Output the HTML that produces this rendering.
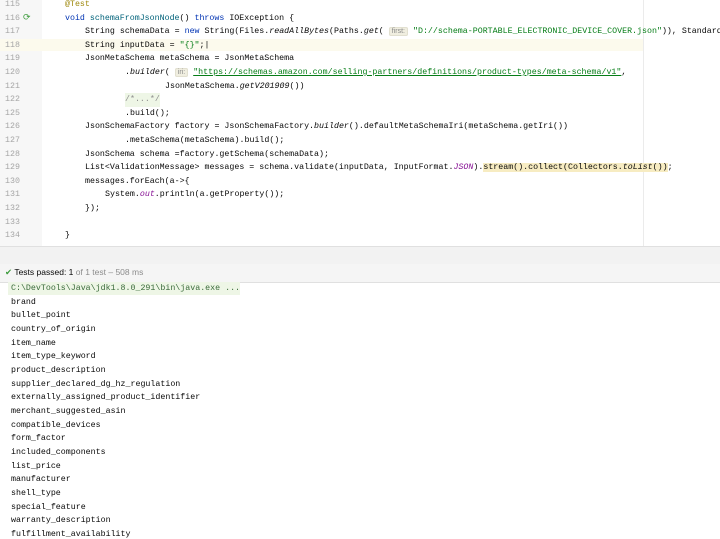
<!DOCTYPE html><html><head><style>
body{margin:0;width:720px;height:539px;overflow:hidden;background:#fff;font-family:"Liberation Mono",monospace;font-size:8.3px;color:#080808;position:relative}
#w{position:absolute;left:0;top:0;width:720px;height:539px;overflow:hidden}
.g{position:absolute;left:0;top:0;width:42px;height:246px;background:#f7f7f7}
.n{position:absolute;left:5px;color:#a6a6a6;height:13.6px;line-height:13.6px}
.l{position:absolute;white-space:pre;height:13.6px;line-height:13.6px}
.k{color:#0033b3}.s{color:#067d17}.a{color:#9e880d}.i{font-style:italic}.p{color:#871094}
.h{background:#f0eee0;border:1px solid #e2e0d0;border-radius:2px;color:#8a8a8a;font-family:"Liberation Sans",sans-serif;font-size:7px;padding:0 2px}
.u{text-decoration:underline}
.c{position:absolute;left:11px;white-space:pre;line-height:13.65px;font-size:8.3px;color:#080808}
</style></head><body><div id="w">
<div class="g"></div>
<div style="position:absolute;left:0;top:39px;width:643px;height:12px;background:#fcfaed"></div>
<div style="position:absolute;left:643px;top:0;width:1px;height:246px;background:#ebebeb"></div>
<div class="n" style="top:-2px">115</div><div class="n" style="top:11.6px">116</div><div class="n" style="top:25.2px">117</div><div class="n" style="top:38.8px">118</div><div class="n" style="top:52.4px">119</div><div class="n" style="top:66px">120</div><div class="n" style="top:79.6px">121</div><div class="n" style="top:93.2px">122</div><div class="n" style="top:106.8px">125</div><div class="n" style="top:120.4px">126</div><div class="n" style="top:134px">127</div><div class="n" style="top:147.6px">128</div><div class="n" style="top:161.2px">129</div><div class="n" style="top:174.8px">130</div><div class="n" style="top:188.4px">131</div><div class="n" style="top:202px">132</div><div class="n" style="top:215.6px">133</div><div class="n" style="top:229.2px">134</div>
<div style="position:absolute;left:23px;top:13px;color:#3c9b3c;font-size:9px">⟳</div>
<div class="l" style="left:65px;top:-2px"><span class="a">@Test</span></div>
<div class="l" style="left:65px;top:11.6px"><span class="k">void</span> <span style="color:#00627a">schemaFromJsonNode</span>() <span class="k">throws</span> IOException {</div>
<div class="l" style="left:85px;top:25.2px">String schemaData = <span class="k">new</span> String(Files.<span class="i">readAllBytes</span>(Paths.<span class="i">get</span>( <span class="h">first:</span> <span class="s">"D://schema-PORTABLE_ELECTRONIC_DEVICE_COVER.json"</span>)), StandardC</div>
<div class="l" style="left:85px;top:38.8px">String inputData = <span class="s">"{}"</span>;|</div>
<div class="l" style="left:85px;top:52.4px">JsonMetaSchema metaSchema = JsonMetaSchema</div>
<div class="l" style="left:125px;top:66px">.<span class="i">builder</span>( <span class="h">iri:</span> <span class="s u">"https://schemas.amazon.com/selling-partners/definitions/product-types/meta-schema/v1"</span>,</div>
<div class="l" style="left:165px;top:79.6px">JsonMetaSchema.<span class="i">getV201909</span>())</div>
<div class="l" style="left:125px;top:93.2px;background:#eef6e6;color:#8c8c8c">/*...*/</div>
<div class="l" style="left:125px;top:106.8px">.build();</div>
<div class="l" style="left:85px;top:120.4px">JsonSchemaFactory factory = JsonSchemaFactory.<span class="i">builder</span>().defaultMetaSchemaIri(metaSchema.getIri())</div>
<div class="l" style="left:125px;top:134px">.metaSchema(metaSchema).build();</div>
<div class="l" style="left:85px;top:147.6px">JsonSchema schema =factory.getSchema(schemaData);</div>
<div class="l" style="left:85px;top:161.2px">List&lt;ValidationMessage&gt; messages = schema.validate(inputData, InputFormat.<span class="p i">JSON</span>).<span style="background:#f7ecc2">stream().collect(Collectors.<span class="i">toList</span>())</span>;</div>
<div class="l" style="left:85px;top:174.8px">messages.forEach(a-&gt;{</div>
<div class="l" style="left:105px;top:188.4px">System.<span class="p i">out</span>.println(a.getProperty());</div>
<div class="l" style="left:85px;top:202px">});</div>
<div class="l" style="left:65px;top:229.2px">}</div>
<div style="position:absolute;left:0;top:246px;width:720px;height:17px;background:#f2f2f2;border-top:1px solid #e0e0e0;border-bottom:1px solid #e0e0e0"></div>
<div style="position:absolute;left:0;top:264px;width:720px;height:18px;background:#f5f5f5;border-bottom:1px solid #e0e0e0;font-family:'Liberation Sans',sans-serif;font-size:8.5px;line-height:17px"><span style="color:#3c9b3c;margin-left:5px">✔</span> Tests passed: 1 <span style="color:#8c8c8c">of 1 test – 508 ms</span></div>
<div style="position:absolute;left:8px;top:282px;width:232px;height:13px;background:#eef6e6"></div>
<div class="c" style="top:282px;color:#3a6b3a">C:\DevTools\Java\jdk1.8.0_291\bin\java.exe ...
<span style="color:#080808">brand
bullet_point
country_of_origin
item_name
item_type_keyword
product_description
supplier_declared_dg_hz_regulation
externally_assigned_product_identifier
merchant_suggested_asin
compatible_devices
form_factor
included_components
list_price
manufacturer
shell_type
special_feature
warranty_description
fulfillment_availability</span></div>
</div></body></html>
